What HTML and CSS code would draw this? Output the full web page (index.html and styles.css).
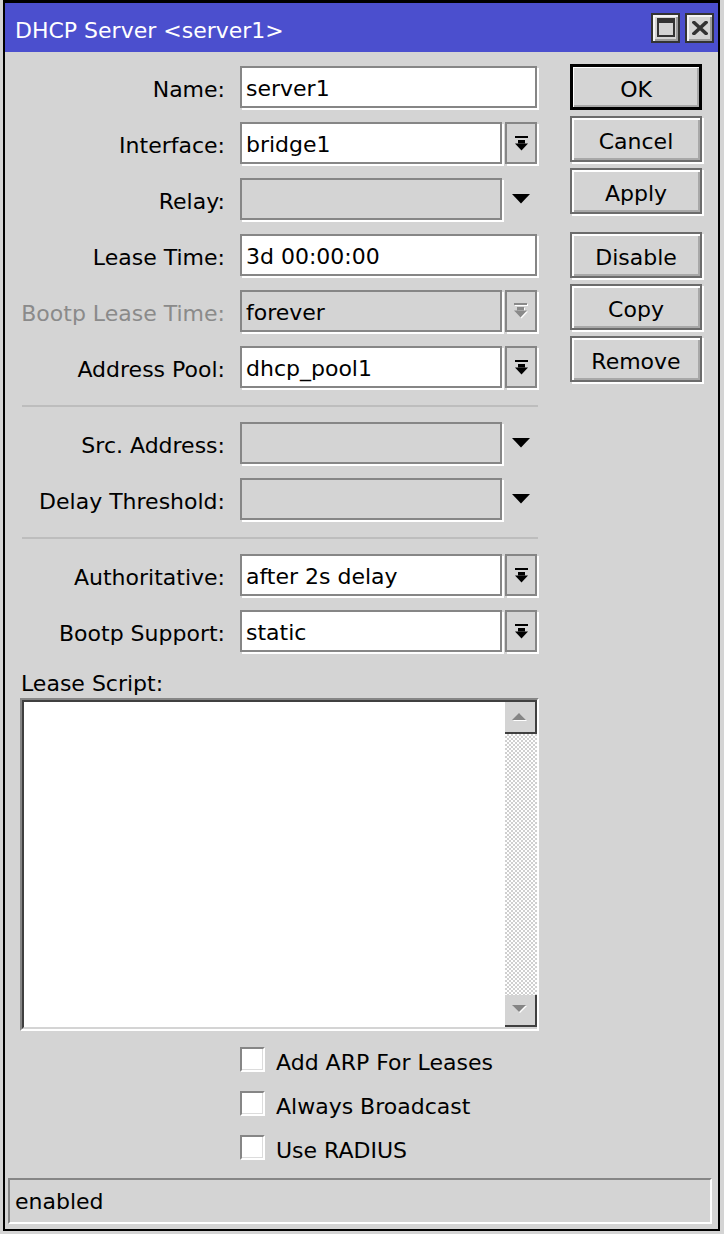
FILE: index.html
```html
<!DOCTYPE html>
<html>
<head>
<meta charset="utf-8">
<title>DHCP Server</title>
<link rel="stylesheet" href="styles.css">
</head>
<body>
<div class="window">
  <div class="titlebar">
    <span class="title">DHCP Server &lt;server1&gt;</span>
    <div class="tbtns">
      <div class="tbtn">
        <svg width="18" height="19" viewBox="0 0 18 19"><rect x="1" y="1" width="16" height="17" fill="none" stroke="#333" stroke-width="2"/><rect x="0" y="0" width="18" height="5" fill="#333"/></svg>
      </div>
      <div class="tbtn">
        <svg width="16" height="14" viewBox="0 0 16 14"><path d="M2 1.5 L14 12.5 M14 1.5 L2 12.5" stroke="#333" stroke-width="3.6" stroke-linecap="square"/></svg>
      </div>
    </div>
  </div>
  <div class="body">
    <div class="main">
      <div class="form">
        <div class="group">
          <div class="row"><span class="lbl">Name:</span><div class="field"><div class="input wide">server1</div></div></div>
          <div class="row"><span class="lbl">Interface:</span><div class="field"><div class="input">bridge1</div><div class="cbtn"><svg width="13" height="15" viewBox="0 0 13 15"><rect x="0" y="0" width="13" height="2" fill="#000"/><rect x="3" y="4" width="7" height="3.5" fill="#000"/><polygon points="0,7.5 13,7.5 6.5,14.5" fill="#000"/></svg></div></div></div>
          <div class="row"><span class="lbl">Relay:</span><div class="field"><div class="input off"></div><div class="arrow"><svg width="18" height="10" viewBox="0 0 18 10"><polygon points="0,0 18,0 9,9.5" fill="#000"/></svg></div></div></div>
          <div class="row"><span class="lbl">Lease Time:</span><div class="field"><div class="input wide">3d 00:00:00</div></div></div>
          <div class="row"><span class="lbl dis">Bootp Lease Time:</span><div class="field"><div class="input off">forever</div><div class="cbtn"><svg width="14" height="16" viewBox="0 0 14 16"><g fill="#fff" transform="translate(1,1)"><rect x="0" y="0" width="13" height="2"/><rect x="3" y="4" width="7" height="3.5"/><polygon points="0,7.5 13,7.5 6.5,14.5"/></g><g fill="#8a8a8a"><rect x="0" y="0" width="13" height="2"/><rect x="3" y="4" width="7" height="3.5"/><polygon points="0,7.5 13,7.5 6.5,14.5"/></g></svg></div></div></div>
          <div class="row"><span class="lbl">Address Pool:</span><div class="field"><div class="input">dhcp_pool1</div><div class="cbtn"><svg width="13" height="15" viewBox="0 0 13 15"><rect x="0" y="0" width="13" height="2" fill="#000"/><rect x="3" y="4" width="7" height="3.5" fill="#000"/><polygon points="0,7.5 13,7.5 6.5,14.5" fill="#000"/></svg></div></div></div>
        </div>
        <div class="sep"></div>
        <div class="group">
          <div class="row"><span class="lbl">Src. Address:</span><div class="field"><div class="input off"></div><div class="arrow"><svg width="18" height="10" viewBox="0 0 18 10"><polygon points="0,0 18,0 9,9.5" fill="#000"/></svg></div></div></div>
          <div class="row"><span class="lbl">Delay Threshold:</span><div class="field"><div class="input off"></div><div class="arrow"><svg width="18" height="10" viewBox="0 0 18 10"><polygon points="0,0 18,0 9,9.5" fill="#000"/></svg></div></div></div>
        </div>
        <div class="sep"></div>
        <div class="group">
          <div class="row"><span class="lbl">Authoritative:</span><div class="field"><div class="input">after 2s delay</div><div class="cbtn"><svg width="13" height="15" viewBox="0 0 13 15"><rect x="0" y="0" width="13" height="2" fill="#000"/><rect x="3" y="4" width="7" height="3.5" fill="#000"/><polygon points="0,7.5 13,7.5 6.5,14.5" fill="#000"/></svg></div></div></div>
          <div class="row"><span class="lbl">Bootp Support:</span><div class="field"><div class="input">static</div><div class="cbtn"><svg width="13" height="15" viewBox="0 0 13 15"><rect x="0" y="0" width="13" height="2" fill="#000"/><rect x="3" y="4" width="7" height="3.5" fill="#000"/><polygon points="0,7.5 13,7.5 6.5,14.5" fill="#000"/></svg></div></div></div>
        </div>
        <div class="script-lbl">Lease Script:</div>
        <div class="script">
          <div class="script-inner">
            <div class="script-text"></div>
            <div class="scrollbar">
              <div class="sb-btn"><svg width="16" height="10" viewBox="0 0 16 10"><polygon points="1,9 15,9 8,2" fill="#fff"/><polygon points="0,8 14,8 7,1" fill="#858585"/></svg></div>
              <div class="sb-track"></div>
              <div class="sb-btn"><svg width="16" height="10" viewBox="0 0 16 10"><polygon points="1,1 15,1 8,8" fill="#fff"/><polygon points="0,0 14,0 7,7" fill="#858585"/></svg></div>
            </div>
          </div>
        </div>
        <div class="checks">
          <div class="check"><span class="cbox"></span><span class="ctext">Add ARP For Leases</span></div>
          <div class="check"><span class="cbox"></span><span class="ctext">Always Broadcast</span></div>
          <div class="check"><span class="cbox"></span><span class="ctext">Use RADIUS</span></div>
        </div>
      </div>
      <div class="buttons">
        <div class="btn default">OK</div>
        <div class="btn">Cancel</div>
        <div class="btn">Apply</div>
        <div class="btn gap">Disable</div>
        <div class="btn">Copy</div>
        <div class="btn">Remove</div>
      </div>
    </div>
    <div class="status">enabled</div>
  </div>
</div>
</body>
</html>
```
FILE: styles.css
```css
html, body {
  margin: 0;
  padding: 0;
}
body {
  background: #d4d4d4;
  font-family: "DejaVu Sans", "Liberation Sans", sans-serif;
  font-size: 22px;
  color: #000;
  width: 724px;
  height: 1234px;
  overflow: hidden;
}
.window {
  margin-left: 3px;
  width: 717px;
  box-sizing: border-box;
  border: 2px solid #000;
  border-top-width: 3px;
  background: #d4d4d4;
}
.titlebar {
  height: 49px;
  background: #4b4fce;
  display: flex;
  align-items: center;
  justify-content: space-between;
  padding: 0 4px 0 10px;
}
.title {
  color: #fff;
  line-height: 28px;
  padding-top: 6px;
}
.tbtns {
  display: flex;
  gap: 5px;
}
.tbtn {
  width: 29px;
  height: 30px;
  box-sizing: border-box;
  border: 2px solid #333;
  background: #d4d4d4;
  box-shadow: inset 2px 2px 0 #f4f4f4, inset -2px -2px 0 #9c9c9c;
  display: flex;
  align-items: center;
  justify-content: center;
}
.body {
  padding: 12px 0 5px 15px;
}
.main {
  display: flex;
  align-items: flex-start;
}
.form {
  width: 519px;
  margin-top: 2px;
  display: flex;
  flex-direction: column;
}
.group {
  display: flex;
  flex-direction: column;
  gap: 14px;
}
.row {
  display: grid;
  grid-template-columns: 205px 297px;
  column-gap: 15px;
  height: 42px;
  align-items: center;
}
.lbl {
  text-align: right;
  white-space: nowrap;
  padding-top: 4px;
}
.lbl.dis {
  color: #8a8a8a;
}
.field {
  display: flex;
  gap: 3px;
  height: 42px;
}
.input {
  width: 262px;
  height: 42px;
  box-sizing: border-box;
  border: 2px solid #868686;
  box-shadow: 2px 2px 0 #fff;
  background: #fff;
  padding: 3px 4px 0;
  line-height: 35px;
  white-space: nowrap;
  overflow: hidden;
}
.input.wide {
  width: 297px;
}
.input.off {
  background: #d4d4d4;
}
.cbtn {
  width: 32px;
  height: 42px;
  box-sizing: border-box;
  border: 2px solid #868686;
  box-shadow: 2px 2px 0 #fff;
  background: #d4d4d4;
  display: flex;
  align-items: center;
  justify-content: center;
}
.arrow {
  width: 32px;
  height: 42px;
  display: flex;
  align-items: center;
  justify-content: center;
}
.sep {
  height: 2px;
  margin: 17px 0 15px 2px;
  width: 516px;
  background: #bdbdbd;
}
.script-lbl {
  margin-top: 18px;
  line-height: 28px;
  padding-left: 1px;
}
.script {
  width: 519px;
  height: 333px;
  box-sizing: border-box;
  border-top: 2px solid #868686;
  border-left: 2px solid #868686;
  border-right: 2px solid #fff;
  border-bottom: 2px solid #fff;
}
.script-inner {
  height: 100%;
  box-sizing: border-box;
  border-top: 2px solid #404040;
  border-left: 2px solid #404040;
  border-bottom: 2px solid #d4d4d4;
  background: #fff;
  display: flex;
}
.script-text {
  flex: 1;
}
.scrollbar {
  width: 32px;
  display: flex;
  flex-direction: column;
}
.sb-btn {
  height: 32px;
  box-sizing: border-box;
  background: #d4d4d4;
  border-right: 2px solid #404040;
  border-bottom: 2px solid #404040;
  display: flex;
  align-items: center;
  justify-content: center;
}
.sb-track {
  flex: 1;
  background-color: #fff;
  background-image: repeating-conic-gradient(#d0d0d0 0 25%, #fff 0 50%);
  background-size: 4px 4px;
}
.checks {
  margin: 16px 0 0 220px;
  display: flex;
  flex-direction: column;
  gap: 19px;
}
.check {
  display: flex;
  align-items: center;
  gap: 11px;
  height: 25px;
  white-space: nowrap;
}
.ctext {
  padding-top: 5px;
}
.cbox {
  width: 25px;
  height: 25px;
  box-sizing: border-box;
  background: #fff;
  border-top: 2px solid #868686;
  border-left: 2px solid #868686;
  border-right: 2px solid #fff;
  border-bottom: 2px solid #fff;
  box-shadow: inset -1px -1px 0 #dcdcdc;
}
.buttons {
  margin-left: 31px;
  width: 132px;
  display: flex;
  flex-direction: column;
  gap: 6px;
}
.btn {
  height: 46px;
  box-sizing: border-box;
  border: 2px solid #6c6c6c;
  box-shadow: inset 2px 2px 0 #fff, inset -2px -2px 0 #a8a8a8, 2px 2px 0 #fff;
  display: flex;
  align-items: center;
  justify-content: center;
  padding-top: 4px;
  background: #d4d4d4;
}
.btn.default {
  border-color: #000;
  box-shadow: inset 1px 1px 0 #000, inset -1px -1px 0 #000, inset 2px 2px 0 #fff, inset -3px -3px 0 #a8a8a8;
}
.btn.gap {
  margin-top: 12px;
}
.status {
  margin: 18px 6px 0 -12px;
  height: 46px;
  box-sizing: border-box;
  border-top: 2px solid #868686;
  border-left: 2px solid #868686;
  border-right: 2px solid #fff;
  border-bottom: 2px solid #fff;
  padding: 2px 0 0 5px;
  line-height: 40px;
}
```
